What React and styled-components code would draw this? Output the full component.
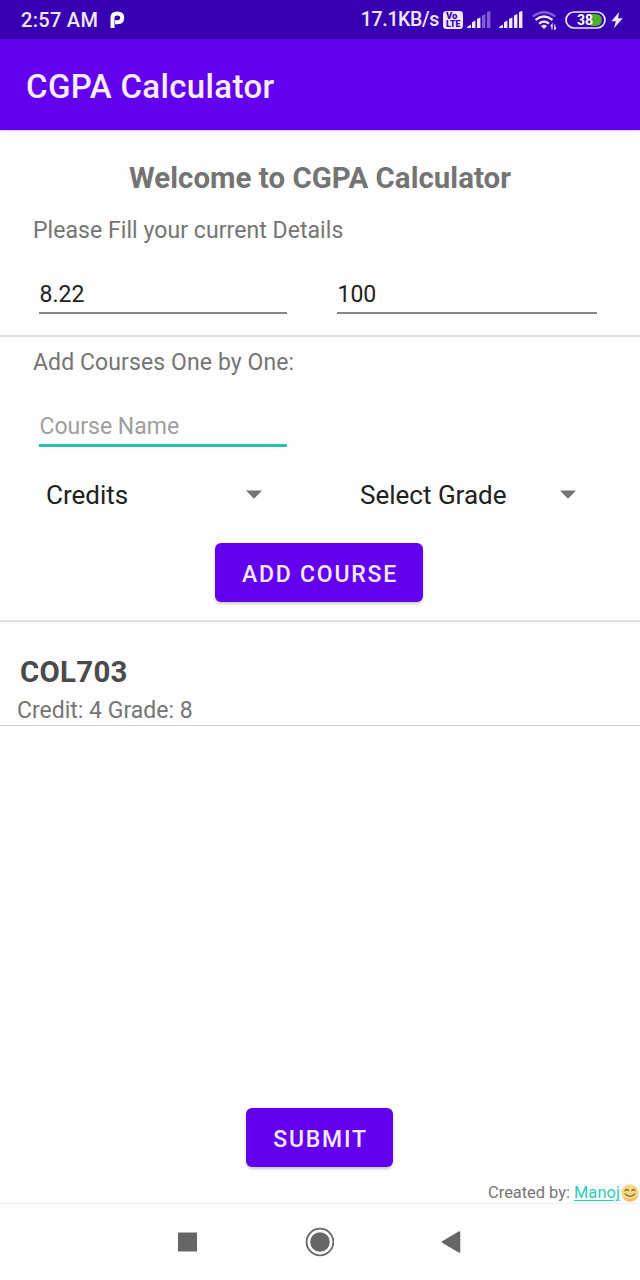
import React from "react";
import styled, { createGlobalStyle } from "styled-components";

const GlobalStyle = createGlobalStyle`
  * { box-sizing: border-box; }
  body { margin: 0; background: #fefefe; font-family: Roboto, "Noto Sans", sans-serif; }
`;

const Screen = styled.div`
  width: 640px;
  height: 1280px;
  display: flex;
  flex-direction: column;
  background: #fefefe;
  overflow: hidden;
`;

const StatusBar = styled.header`
  height: 39px;
  flex: none;
  display: flex;
  align-items: center;
  padding: 0 17px 0 21px;
  background: #3700b3;
  color: #f3e6ff;
`;

const StatusText = styled.span`
  font-size: ${(p) => p.$size || 20}px;
  font-weight: 500;
  line-height: 40px;
  white-space: nowrap;
  letter-spacing: ${(p) => p.$spacing || "0"};
`;

const StatusIcon = styled.svg`
  display: block;
  flex: none;
  margin-left: ${(p) => p.$gap || 0}px;
`;

const Spacer = styled.div`
  flex: 1;
`;

const AppBar = styled.div`
  height: 91px;
  flex: none;
  display: flex;
  align-items: center;
  padding: 4px 26px 0;
  background: #6200ee;
  box-shadow: 0 1px 2px rgba(98, 0, 238, 0.25);
`;

const AppTitle = styled.h1`
  margin: 0;
  font-size: 33px;
  font-weight: 500;
  line-height: 40px;
  letter-spacing: 0.35px;
  color: #f8ecff;
`;

const Content = styled.main`
  flex: 1;
  display: flex;
  flex-direction: column;
`;

const Welcome = styled.h2`
  margin: 28px 0 0;
  text-align: center;
  font-size: 29.4px;
  font-weight: 700;
  line-height: 40px;
  letter-spacing: 0.05px;
  color: #747474;
`;

const Label = styled.p`
  margin: ${(p) => p.$top}px 0 0 33px;
  font-size: 23px;
  line-height: 30px;
  letter-spacing: ${(p) => p.$spacing || "0.06px"};
  color: #757575;
`;

const FieldRow = styled.div`
  display: flex;
  gap: 50px;
  margin: 33px 43px 0 39px;
`;

const Field = styled.input`
  display: block;
  width: ${(p) => p.$width}px;
  height: ${(p) => (p.$active ? 36 : 35)}px;
  padding: 0 0 3px 0.5px;
  border: 0;
  border-bottom: ${(p) => (p.$active ? "3px solid #2bbfae" : "2px solid #868686")};
  border-radius: 0;
  outline: none;
  background: transparent;
  font-family: inherit;
  font-size: 23px;
  color: #222;
  &::placeholder { color: #9e9e9e; opacity: 1; }
`;

const Divider = styled.hr`
  flex: none;
  width: 100%;
  height: ${(p) => p.$size || 2}px;
  margin: ${(p) => p.$top || 0}px 0 0;
  border: 0;
  background: ${(p) => p.$color || "#e0e0e0"};
`;

const SpinnerRow = styled.div`
  display: flex;
  gap: 98px;
  margin: 33px 0 0 46px;
`;

const Spinner = styled.div`
  width: 216px;
  height: 30px;
  display: flex;
  align-items: center;
  justify-content: space-between;
  font-size: 26px;
  line-height: 30px;
  color: #212121;
`;

const CaretIcon = styled.svg`
  display: block;
  margin-bottom: 2px;
`;

const Button = styled.button`
  align-self: center;
  flex: none;
  width: ${(p) => p.$width}px;
  height: 59px;
  margin: ${(p) => p.$top || 0}px ${(p) => p.$shift || 0}px 0 0;
  padding: 3px 0 0 2px;
  border: 0;
  border-radius: 6px;
  background: #6200ee;
  box-shadow: 0 2px 3px rgba(0, 0, 0, 0.2);
  font-family: inherit;
  font-size: 23px;
  font-weight: 500;
  letter-spacing: 1.75px;
  color: #f6e9ff;
`;

const CourseList = styled.section`
  flex: 1;
`;

const CourseName = styled.h3`
  margin: 30px 0 0 20px;
  font-size: 29.4px;
  font-weight: 700;
  line-height: 40px;
  letter-spacing: 0.3px;
  color: #4a4a4a;
`;

const CourseInfo = styled.p`
  height: 33px;
  margin: 0 0 0 17px;
  padding-top: 4px;
  font-size: 23px;
  line-height: 30px;
  color: #757575;
`;

const Credit = styled.footer`
  display: flex;
  align-items: center;
  justify-content: flex-end;
  height: 22px;
  margin-top: 14px;
  padding: 2px 1px 0 0;
  font-size: 16.4px;
  line-height: 20px;
  color: #757575;
`;

const CreditLink = styled.a`
  margin: 0 1px 0 4px;
  letter-spacing: 0.1px;
  color: #2bcdbb;
  text-decoration: underline;
  text-decoration-thickness: 1px;
  text-underline-offset: 2px;
`;

const SmileIcon = styled.svg`
  display: block;
  flex: none;
  margin-bottom: 1px;
`;

const NavBar = styled.nav`
  height: 77px;
  flex: none;
  display: flex;
  justify-content: space-between;
  align-items: center;
  padding: 0 179px 1px 177px;
  border-top: 1px solid #f1f1f1;
`;

const Signal = ({ gap, faded = 0 }) => (
  <StatusIcon $gap={gap} width="24" height="18" viewBox="0 0 24 18">
    {[0, 1, 2, 3, 4].map((i) => (
      <path
        key={i}
        fill="#f3e6ff"
        opacity={i >= 5 - faded ? 0.4 : 1}
        d={i === 0 ? "M0 17V16L4 13.5V17Z" : `M${i * 5} ${14.5 - i * 3.3}l3.4-1.7V17h-3.4Z`}
      />
    ))}
  </StatusIcon>
);

const Caret = () => (
  <CaretIcon width="16" height="9" viewBox="0 0 16 9">
    <path d="M0 0.5H16L8 8.7Z" fill="#737373" />
  </CaretIcon>
);

const VolteBadge = () => (
  <StatusIcon $gap={4} width="20" height="18" viewBox="0 0 20 18">
    <rect width="20" height="18" rx="3.5" fill="#f3e6ff" />
    <g fill="#3700b3" fontFamily="Roboto, sans-serif" fontWeight="900">
      <text x="3" y="8.3" fontSize="8.5" textLength="11.5" lengthAdjust="spacingAndGlyphs">Vo</text>
      <text x="3" y="16" fontSize="8.5" textLength="14.5" lengthAdjust="spacingAndGlyphs">LTE</text>
    </g>
  </StatusIcon>
);

const Smile = () => (
  <SmileIcon width="18" height="18" viewBox="0 0 18 18">
    <circle cx="9" cy="9" r="8.7" fill="#f7d983" />
    <path d="M2 14A8.7 8.7 0 0 0 17.3 11Q12 17 2 14Z" fill="#efbd70" />
    <g fill="none" stroke="#79572d" strokeWidth="1.2" strokeLinecap="round">
      <path d="M4 6.7Q5.8 4 7.4 6.7M10.8 6.7Q12.5 4 14.1 6.7" />
      <path d="M4.2 9.8Q9 14.8 13.8 9.8" />
    </g>
  </SmileIcon>
);

export default function App() {
  return (
    <>
      <GlobalStyle />
      <Screen>
        <StatusBar>
          <StatusText $spacing="0.3px">2:57 AM</StatusText>
          <StatusIcon $gap={12} width="15" height="18" viewBox="0 0 15 18">
            <path d="M2.5 17V6.5Q2.5 2.5 7.2 2.5Q12.2 2.5 12.2 6.8Q12.2 11.2 7.5 11.2H5" fill="none" stroke="#fff" strokeWidth="4" />
          </StatusIcon>
          <Spacer />
          <StatusText $size={19.5} $spacing="-0.35px">17.1KB/s</StatusText>
          <VolteBadge />
          <Signal gap={4} faded={2} />
          <Signal gap={8} />
          <StatusIcon $gap={9} width="25" height="20" viewBox="0 0 25 20">
            <g fill="none" stroke="#f3e6ff" strokeWidth="2.3">
              <path d="M0.8 6.5Q12 -2 23.2 6.5" opacity=".4" />
              <path d="M3.5 9.8Q12 3.2 20.5 9.8" />
              <path d="M7 13.6Q12 9.6 17 13.6" />
            </g>
            <path d="M9 16Q12 13.5 15 16L12 19Z" fill="#f3e6ff" />
            <path d="M20 19.5v-5l-1.4 2M22.7 14.5v5l1.4-2" fill="none" stroke="#f3e6ff" strokeWidth="1.2" />
          </StatusIcon>
          <StatusIcon $gap={8} width="41" height="18" viewBox="0 0 41 18">
            <path d="M26 3H31A6 6 0 0 1 31 15H26Z" fill="#4caf30" />
            <rect x="1" y="1" width="39" height="16" rx="8" fill="none" stroke="#f3e6ff" strokeWidth="1.7" />
            <text x="12" y="13.9" fill="#fff" fontFamily="Roboto, sans-serif" fontWeight="700" fontSize="14">38</text>
          </StatusIcon>
          <StatusIcon $gap={5} width="12" height="18" viewBox="0 0 12 18">
            <path d="M8.2 1L0.3 10.2H4.8L3 17.2L11.8 7.3H7Z" fill="#f3e6ff" />
          </StatusIcon>
        </StatusBar>
        <AppBar>
          <AppTitle>CGPA Calculator</AppTitle>
        </AppBar>
        <Content>
          <Welcome>Welcome to CGPA Calculator</Welcome>
          <Label $top={18}>Please Fill your current Details</Label>
          <FieldRow>
            <Field $width={248} defaultValue="8.22" />
            <Field $width={260} defaultValue="100" />
          </FieldRow>
          <Divider $top={21} />
          <Label $top={11} $spacing="0.1px">Add Courses One by One:</Label>
          <FieldRow>
            <Field $width={248} $active placeholder="Course Name" />
          </FieldRow>
          <SpinnerRow>
            <Spinner>Credits<Caret /></Spinner>
            <Spinner>Select Grade<Caret /></Spinner>
          </SpinnerRow>
          <Button $width={208} $top={33} $shift={2}>ADD COURSE</Button>
          <Divider $top={18} />
          <CourseList>
            <CourseName>COL703</CourseName>
            <CourseInfo>Credit: 4 Grade: 8</CourseInfo>
            <Divider $size={1} $color="#d3d3d3" />
          </CourseList>
          <Button $width={147} $shift={1}>SUBMIT</Button>
          <Credit>
            Created by:<CreditLink>Manoj</CreditLink><Smile />
          </Credit>
        </Content>
        <NavBar>
          <svg width="20" height="20"><rect x="1" y="0.5" width="19" height="19" fill="#666" /></svg>
          <svg width="30" height="30" viewBox="0 0 30 30">
            <circle cx="16" cy="15" r="13.4" fill="none" stroke="#666" strokeWidth="1.8" />
            <circle cx="16" cy="15" r="9.8" fill="#666" />
          </svg>
          <svg width="20" height="22" viewBox="0 0 20 22">
            <path d="M1.5 11L18.5 1V21Z" fill="#666" stroke="#666" strokeWidth="1.5" strokeLinejoin="round" />
          </svg>
        </NavBar>
      </Screen>
    </>
  );
}
